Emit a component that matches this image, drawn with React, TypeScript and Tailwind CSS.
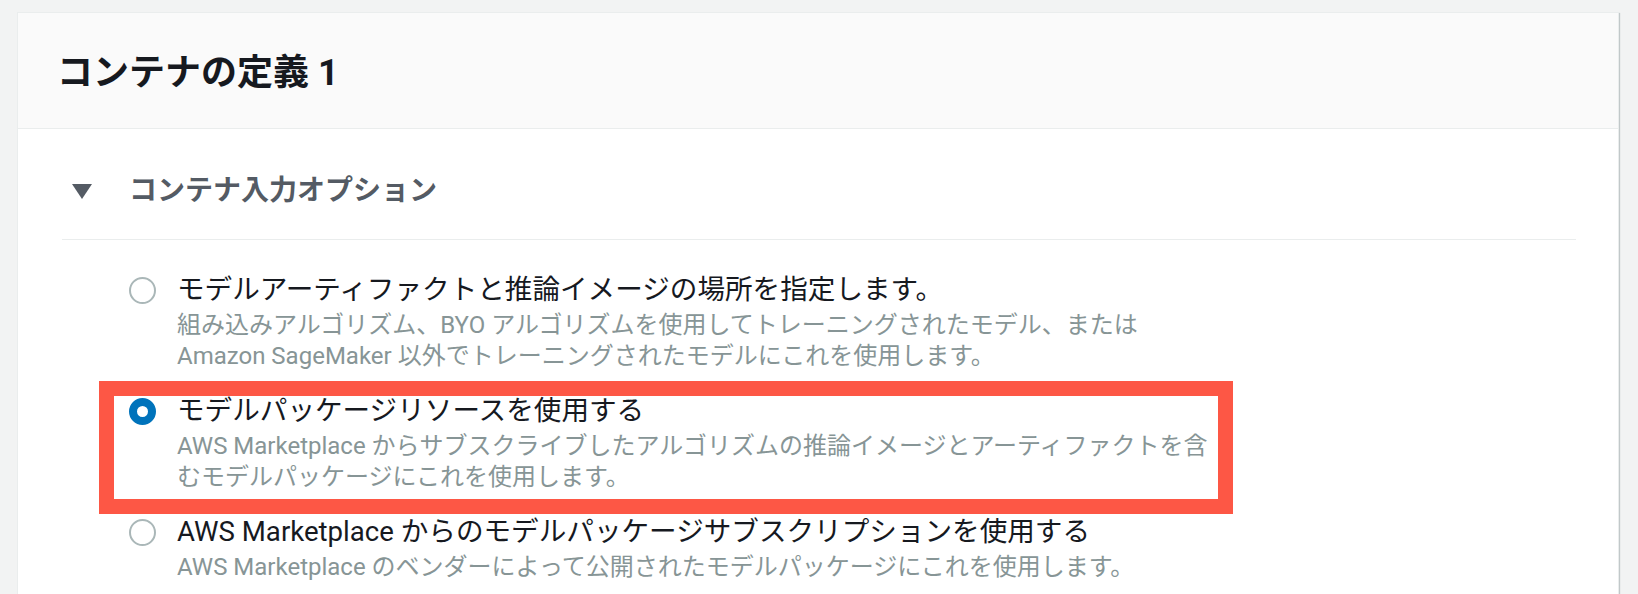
import React, { useState } from 'react';

type Option = {
  id: string;
  label: React.ReactNode;
  description: React.ReactNode;
};

const options: Option[] = [
  {
    id: 'artifacts',
    label: 'モデルアーティファクトと推論イメージの場所を指定します。',
    description: (
      <>
        組み込みアルゴリズム、BYO アルゴリズムを使用してトレーニングされたモデル、または
        <br />
        Amazon SageMaker 以外でトレーニングされたモデルにこれを使用します。
      </>
    ),
  },
  {
    id: 'package',
    label: 'モデルパッケージリソースを使用する',
    description: (
      <>
        AWS Marketplace からサブスクライブしたアルゴリズムの推論イメージとアーティファクトを含
        <br />
        むモデルパッケージにこれを使用します。
      </>
    ),
  },
  {
    id: 'marketplace',
    label: 'AWS Marketplace からのモデルパッケージサブスクリプションを使用する',
    description: 'AWS Marketplace のベンダーによって公開されたモデルパッケージにこれを使用します。',
  },
];

const Radio: React.FC<{ checked: boolean }> = ({ checked }) => (
  <span
    className={`mt-[5px] block h-[27px] w-[27px] shrink-0 rounded-full bg-white ${
      checked ? 'border-[8px] border-[#0073bb]' : 'border-[2.5px] border-[#aab7b8]'
    }`}
  />
);

const App: React.FC = () => {
  const [selected, setSelected] = useState('package');

  return (
    <div
      className="min-h-[594px] w-full bg-[#f2f3f3] pt-[12px] pl-[17px] pr-[19px] text-[#16191f]"
      style={{ fontFamily: 'Roboto, "Noto Sans CJK JP", sans-serif' }}
    >
      <div className="border border-[#eaeded] bg-white shadow-[1px_1px_1px_0_rgba(0,28,36,0.2)]">
        {/* Header */}
        <div className="flex h-[116px] items-center border-b border-[#eaeded] bg-[#fafafa] px-[39px] pt-[4px]">
          <h2 className="text-[36px] font-bold leading-[44px]">コンテナの定義 1</h2>
        </div>

        {/* Body */}
        <div className="pl-[44px] pr-[42px]">
          {/* Expandable section header */}
          <div className="flex items-center border-b border-[#eaeded] pt-[42px] pb-[28px]">
            <svg width="20" height="15" viewBox="0 0 20 15" className="ml-[10px] shrink-0">
              <path d="M0 0 H20 L10 15 Z" fill="#545b64" />
            </svg>
            <span className="ml-[37px] text-[28px] font-bold leading-[40px] text-[#545b64]">
              コンテナ入力オプション
            </span>
          </div>

          {/* Radio group */}
          <div className="pt-[32px] pb-[40px] pl-[67px]">
            {options.map((opt, i) => (
              <div key={opt.id} className={`relative ${i > 0 ? 'mt-[21px]' : ''}`}>
                {opt.id === 'package' && (
                  <div className="pointer-events-none absolute -top-[12px] -bottom-[21px] -left-[30px] w-[1134px] border-[15px] border-[#fd5745]" />
                )}
                <label className="flex cursor-pointer items-start gap-[21px]" onClick={() => setSelected(opt.id)}>
                  <Radio checked={selected === opt.id} />
                  <div>
                    <div className="text-[27.6px] leading-[36px] text-[#16191f]">{opt.label}</div>
                    <div className="mt-[2px] text-[24px] leading-[31px] text-[#879596]">{opt.description}</div>
                  </div>
                </label>
              </div>
            ))}
          </div>
        </div>
      </div>
    </div>
  );
};

export default App;
